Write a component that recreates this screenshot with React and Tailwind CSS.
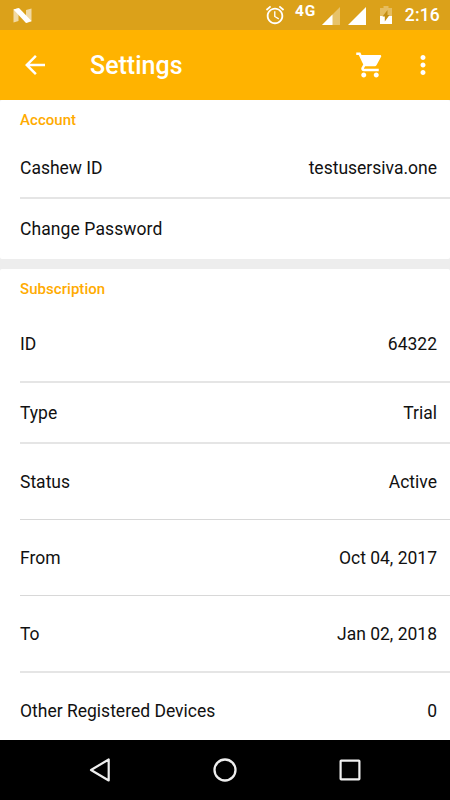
const accountRows = [
  { label: 'Cashew ID', value: 'testusersiva.one', className: 'h-[61px] border-b-2 border-[#e5e5e5]' },
  { label: 'Change Password', className: 'h-[60px] tracking-[0.1px]' },
];

const subscriptionRows = [
  { label: 'ID', value: '64322', className: 'h-[76px] border-b-2 border-[#e5e5e5]' },
  { label: 'Type', value: 'Trial', className: 'h-[61px] border-b-2 border-[#e5e5e5]' },
  { label: 'Status', value: 'Active', className: 'h-[76px] border-b border-[#d8d8d8]' },
  { label: 'From', value: 'Oct 04, 2017', className: 'h-[76px] border-b border-[#d8d8d8]' },
  { label: 'To', value: 'Jan 02, 2018', className: 'h-[77px] border-b-2 border-[#e5e5e5]' },
  { label: 'Other Registered Devices', value: '0', className: 'h-[76px]' },
];

function StatusBar() {
  return (
    <div className="flex h-[30px] shrink-0 items-center bg-[#dba11a] pr-[10px] pl-[13px] text-white">
      <svg className="h-[15px] w-[19px]" viewBox="0 0 19 15">
        <path d="M.5 1.500 5.500 0v13L.5 14.500zM13 2l5.500-1.500v13L13 15z" fill="#fff" fillOpacity=".6" />
        <path d="M.5 1.500 6 0 18.500 13 13 15z" fill="#fff" />
      </svg>
      <svg className="ml-[232px] size-[22px]" viewBox="0 0 24 24" fill="currentColor">
        <path d="M22 5.720l-4.600-3.860-1.290 1.530 4.600 3.860L22 5.720zM7.880 3.390L6.600 1.860 2 5.710l1.290 1.530 4.590-3.850zM12.500 8H11v6l4.750 2.850.75-1.230-4-2.370V8zM12 4c-4.970 0-9 4.030-9 9s4.020 9 9 9c4.970 0 9-4.030 9-9s-4.030-9-9-9zm0 16c-3.870 0-7-3.130-7-7s3.130-7 7-7 7 3.130 7 7-3.130 7-7 7z" />
      </svg>
      <span className="ml-[9px] w-[22px] pb-[8px] text-[15.5px] leading-[16px] font-bold tracking-[0.9px]">4G</span>
      <svg className="mt-[2px] ml-[5px] size-[18px]" viewBox="0 0 18 18" fill="currentColor">
        <path d="M0 18 18 0v18z" fillOpacity=".35" />
        <path d="M0 18 10.500 7.500V18z" />
      </svg>
      <svg className="mt-[2px] ml-[8px] size-[18px]" viewBox="0 0 18 18" fill="currentColor">
        <path d="M0 18 18 0v18z" />
      </svg>
      <svg className="ml-[14px] h-[18px] w-[12px]" viewBox="0 0 12 18" fill="currentColor">
        <path d="M0 2h3.500V0h5v2H12v8H0z" fillOpacity=".3" />
        <path d="M0 10h12v8H0z" />
        <path d="M7.500 4v5h2L4.800 15.500V10.500H2.500z" fill="#c48f14" />
      </svg>
      <span className="ml-auto text-[17.5px] leading-[20px] font-medium tracking-[0.2px]">2:16</span>
    </div>
  );
}

function AppBar() {
  return (
    <header className="flex h-[70px] shrink-0 items-center bg-[#ffb300] pr-[12px] pl-5 text-white">
      <svg className="size-[30px]" viewBox="0 0 24 24" fill="currentColor">
        <path d="M20 11H7.830l5.590-5.590L12 4l-8 8 8 8 1.410-1.410L7.830 13H20v-2z" />
      </svg>
      <h1 className="ml-10 pt-[2px] text-[25px] leading-[30px] font-medium">Settings</h1>
      <svg className="ml-auto size-[30px]" viewBox="0 0 24 24" fill="currentColor">
        <path d="M7 18c-1.100 0-1.990.9-1.990 2S5.900 22 7 22s2-.9 2-2-.9-2-2-2zM1 2v2h2l3.600 7.590-1.350 2.450c-.16.28-.25.61-.25.96 0 1.100.9 2 2 2h12v-2H7.420c-.14 0-.25-.11-.25-.25l.03-.12.9-1.630h7.450c.75 0 1.410-.41 1.750-1.030l3.580-6.490c.08-.14.12-.31.12-.48 0-.55-.45-1-1-1H5.210l-.94-2H1zm16 16c-1.100 0-1.990.9-1.990 2s.89 2 1.990 2 2-.9 2-2-.9-2-2-2z" />
      </svg>
      <svg className="ml-[23px] size-[30px]" viewBox="0 0 24 24" fill="currentColor">
        <path d="M12 8c1.100 0 2-.9 2-2s-.9-2-2-2-2 .9-2 2 .9 2 2 2zm0 2c-1.100 0-2 .9-2 2s.9 2 2 2 2-.9 2-2-.9-2-2-2zm0 6c-1.100 0-2 .9-2 2s.9 2 2 2 2-.9 2-2-.9-2-2-2z" />
      </svg>
    </header>
  );
}

function Section({ title, rows }) {
  return (
    <section className="shrink-0 rounded-[2px] bg-white pl-5">
      <h2 className="h-[38px] pt-[11px] text-[15px] leading-[18px] font-medium tracking-[0.05px] text-[#ffab00]">{title}</h2>
      {rows.map(({ label, value, className }) => (
        <div
          key={label}
          className={`flex items-center justify-between pr-[13px] text-[17.5px] leading-[20px] text-[#111] ${className}`}
        >
          <span>{label}</span>
          {value && <span>{value}</span>}
        </div>
      ))}
    </section>
  );
}

function NavBar() {
  return (
    <nav className="flex h-[60px] shrink-0 items-center justify-between bg-black px-[85px]">
      <svg className="size-[30px]" viewBox="0 0 30 30" fill="none" stroke="#eee" strokeWidth="2.200" strokeLinejoin="round">
        <path d="M23.700 4.500v21L6 15z" />
      </svg>
      <svg className="size-[30px]" viewBox="0 0 30 30" fill="none" stroke="#eee" strokeWidth="2.300">
        <circle cx="15" cy="15" r="10.500" />
      </svg>
      <svg className="size-[30px]" viewBox="0 0 30 30" fill="none" stroke="#eee" strokeWidth="2.200">
        <rect x="5.600" y="5.600" width="18.800" height="18.800" rx=".6" />
      </svg>
    </nav>
  );
}

export default function App() {
  return (
    <div className="flex h-[800px] w-[450px] flex-col overflow-hidden bg-[#ededed] font-[Roboto,sans-serif]">
      <StatusBar />
      <AppBar />
      <main className="flex min-h-0 flex-1 flex-col gap-[10px] overflow-hidden">
        <Section title="Account" rows={accountRows} />
        <Section title="Subscription" rows={subscriptionRows} />
      </main>
      <NavBar />
    </div>
  );
}
